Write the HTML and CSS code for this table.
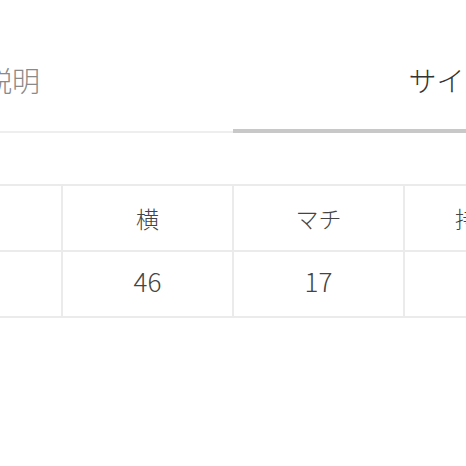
FILE: index.html
```html
<!DOCTYPE html>
<html lang="ja">
<head>
<meta charset="utf-8">
<link rel="stylesheet" href="styles.css">
</head>
<body>
<div class="page">
  <div class="tabs">
    <div class="tab first">商品説明</div>
    <div class="tab active">サイズ</div>
  </div>
  <div class="size-table">
    <div class="cell"></div>
    <div class="cell">横</div>
    <div class="cell">マチ</div>
    <div class="cell">持ち手</div>
    <div class="cell"></div>
    <div class="cell num">46</div>
    <div class="cell num">17</div>
    <div class="cell"></div>
  </div>
</div>
</body>
</html>
```
FILE: styles.css
```css
html, body {
  margin: 0;
  padding: 0;
  background: #fff;
}
body {
  width: 466px;
  height: 466px;
  overflow: hidden;
  font-family: "Noto Sans CJK JP", "Noto Sans", sans-serif;
}
.page {
  width: 466px;
}
.tabs {
  display: flex;
  align-items: flex-start;
  margin-left: -201px;
  width: 868px;
  border-bottom: 2px solid #eeeeee;
}
.tab {
  box-sizing: border-box;
  width: 434px;
  flex: none;
  height: 131px;
  padding-top: 60px;
  font-size: 28px;
  font-weight: 300;
  line-height: 40px;
  text-align: center;
  color: #8a8a8a;
}
.tab.first {
  padding-right: 64px;
}
.tab.active {
  height: 133px;
  margin-bottom: -2px;
  border-bottom: 4px solid #c8c8c8;
  color: #333333;
}
.size-table {
  display: grid;
  grid-template-columns: repeat(4, 169px);
  grid-auto-rows: 64px;
  gap: 2px;
  padding: 2px;
  width: max-content;
  background: #ebebeb;
  margin-top: 51px;
  margin-left: -110px;
}
.cell {
  background: #fff;
  display: flex;
  align-items: center;
  justify-content: center;
  font-size: 23px;
  font-weight: 300;
  color: #444;
}
.cell.num {
  font-size: 26px;
  padding-bottom: 7px;
  box-sizing: border-box;
}
```
